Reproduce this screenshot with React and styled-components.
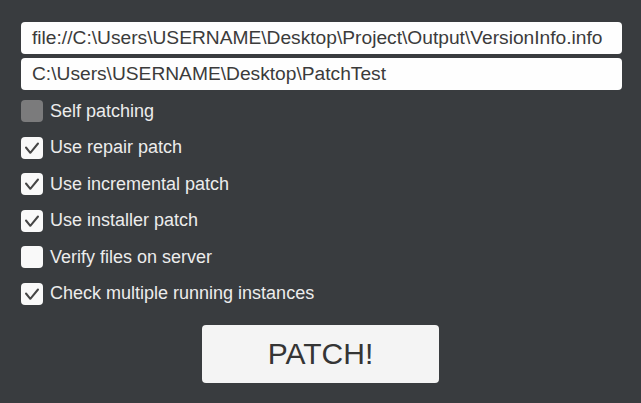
import React from "react";
import styled, { createGlobalStyle } from "styled-components";

const Global = createGlobalStyle`
  html, body { margin: 0; padding: 0; background: #393c3f; }
  body { font-family: "Liberation Sans", Arial, sans-serif; }
`;

const Page = styled.div`
  width: 641px;
  height: 403px;
  box-sizing: border-box;
  padding: 22px 19px 0 21px;
  background: #393c3f;
  display: flex;
  flex-direction: column;
`;

const Field = styled.div`
  height: 32px;
  box-sizing: border-box;
  background: #fefefe;
  border-radius: 4px;
  display: flex;
  align-items: center;
  padding: 0 11px;
  font-size: 19.2px;
  color: #3b3b3b;
  white-space: nowrap;
  margin-bottom: 4px;
`;

const Options = styled.div`
  display: flex;
  flex-direction: column;
  gap: 14.6px;
  margin-top: 6px;
`;

const Row = styled.label`
  display: flex;
  align-items: center;
  gap: 7px;
  height: 22px;
  font-size: 18px;
  color: #ececec;
`;

const Box = styled.span`
  width: 22px;
  height: 22px;
  border-radius: 4px;
  background: ${(p) => (p.$disabled ? "#7b7b7c" : "#f9f9f9")};
  display: flex;
  align-items: center;
  justify-content: center;
  flex-shrink: 0;
`;

const Footer = styled.div`
  display: flex;
  justify-content: center;
  margin-top: 20px;
  padding-right: 2px;
`;

const Button = styled.button`
  width: 237px;
  height: 58px;
  border: none;
  border-radius: 4px;
  background: #f4f4f4;
  color: #353535;
  font-family: "Liberation Sans", Arial, sans-serif;
  font-size: 30px;
  padding: 0;
  cursor: pointer;
`;

const Check = () => (
  <svg width="22" height="22" viewBox="0 0 22 22">
    <path d="M5 10.5 L9.3 15.8 L17 6.5" fill="none" stroke="#454545" strokeWidth="2" strokeLinecap="round" strokeLinejoin="round" />
  </svg>
);

const options = [
  { label: "Self patching", checked: false, disabled: true },
  { label: "Use repair patch", checked: true },
  { label: "Use incremental patch", checked: true },
  { label: "Use installer patch", checked: true },
  { label: "Verify files on server", checked: false },
  { label: "Check multiple running instances", checked: true },
];

export default function App() {
  return (
    <>
      <Global />
      <Page>
        <Field>file://C:\Users\USERNAME\Desktop\Project\Output\VersionInfo.info</Field>
        <Field>C:\Users\USERNAME\Desktop\PatchTest</Field>
        <Options>
          {options.map((o) => (
            <Row key={o.label}>
              <Box $disabled={o.disabled}>{o.checked && <Check />}</Box>
              {o.label}
            </Row>
          ))}
        </Options>
        <Footer>
          <Button>PATCH!</Button>
        </Footer>
      </Page>
    </>
  );
}
